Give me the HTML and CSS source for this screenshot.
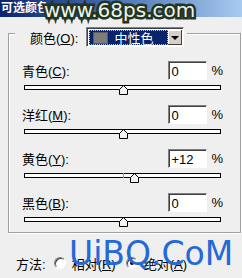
FILE: index.html
```html
<!DOCTYPE html>
<html>

<head>
    <meta charset="utf-8">
    <meta name="viewport" content="width=device-width">
    <title>可选颜色</title>
    <link rel="stylesheet" href="styles.css">
</head>

<body>
    <div class="titlebar">可选颜色</div>
    <div class="mark-top">www.68ps.com</div>

    <div class="group">
        <div class="legend">
            <span class="label">颜色(<u>O</u>):</span>
            <div class="select">
                <div class="select-value"><span class="swatch"></span>中性色</div>
                <div class="select-arrow"></div>
            </div>
        </div>

        <div class="row">
            <div class="row-top">
                <span class="label">青色(<u>C</u>):</span>
                <div class="field">0</div>
                <span class="pct">%</span>
            </div>
            <div class="slider">
                <div class="track"></div>
                <svg class="thumb" style="left: 50%;" width="9" height="10" viewBox="0 0 9 10"><polygon points="0.5,9.5 0.5,4.5 4.5,0.5 8.5,4.5 8.5,9.5" /></svg>
            </div>
        </div>

        <div class="row">
            <div class="row-top">
                <span class="label">洋红(<u>M</u>):</span>
                <div class="field">0</div>
                <span class="pct">%</span>
            </div>
            <div class="slider">
                <div class="track"></div>
                <svg class="thumb" style="left: 50%;" width="9" height="10" viewBox="0 0 9 10"><polygon points="0.5,9.5 0.5,4.5 4.5,0.5 8.5,4.5 8.5,9.5" /></svg>
            </div>
        </div>

        <div class="row">
            <div class="row-top">
                <span class="label">黄色(<u>Y</u>):</span>
                <div class="field">+12</div>
                <span class="pct">%</span>
            </div>
            <div class="slider">
                <div class="track"><div class="track-mark"></div></div>
                <svg class="thumb" style="left: 56%;" width="9" height="10" viewBox="0 0 9 10"><polygon points="0.5,9.5 0.5,4.5 4.5,0.5 8.5,4.5 8.5,9.5" /></svg>
            </div>
        </div>

        <div class="row">
            <div class="row-top">
                <span class="label">黑色(<u>B</u>):</span>
                <div class="field">0</div>
                <span class="pct">%</span>
            </div>
            <div class="slider">
                <div class="track"></div>
                <svg class="thumb" style="left: 50%;" width="9" height="10" viewBox="0 0 9 10"><polygon points="0.5,9.5 0.5,4.5 4.5,0.5 8.5,4.5 8.5,9.5" /></svg>
            </div>
        </div>
    </div>

    <div class="method">
        <span class="method-label">方法:</span>
        <span class="radio"></span>
        <span class="radio-text">相对(<u>R</u>)</span>
        <span class="radio checked"></span>
        <span class="radio-text">绝对(<u>A</u>)</span>
    </div>

    <div class="mark-bottom">UiBQ.CoM</div>
</body>

</html>
```

FILE: styles.css
```css
body {
    margin: 0;
    width: 242px;
    height: 278px;
    overflow: hidden;
    position: relative;
    background-color: #efefef;
    font-family: "Liberation Sans", "Noto Sans CJK SC", sans-serif;
    font-size: 13px;
    color: #000;
}

.titlebar {
    height: 17px;
    line-height: 16px;
    padding-left: 1px;
    background: linear-gradient(to right, #0a246a, #3f65a8 40%, #a6caf0);
    color: #fff;
    font-weight: bold;
    font-size: 12px;
}

/* watermarks sit over the dialog */
.mark-top {
    position: absolute;
    left: 44px;
    top: 0;
    font-family: "DejaVu Sans", sans-serif;
    font-size: 20px;
    line-height: 20px;
    color: #eef3ea;
    -webkit-text-stroke: 5px #223422;
    paint-order: stroke fill;
}

.mark-bottom {
    position: absolute;
    left: 69px;
    top: 237px;
    font-family: "DejaVu Sans", sans-serif;
    font-size: 33px;
    line-height: 33px;
    white-space: nowrap;
    color: #2369d8;
}

.group {
    margin: 16px 0 0 8px;
    width: 233px;
    box-sizing: border-box;
    border: 1px solid #a0a0a0;
    box-shadow: 1px 1px 0 #fff, inset 1px 1px 0 #fff;
    padding: 0 0 5px 0;
}

.legend {
    display: flex;
    align-items: center;
    width: max-content;
    height: 20px;
    margin: -7px 0 0 6px;
    padding: 0 3px 0 15px;
    background-color: #efefef;
}

.label {
    white-space: nowrap;
}

.legend .select {
    margin-left: 8px;
}

.select {
    display: flex;
    width: 98px;
    height: 20px;
    box-sizing: border-box;
    border: 1px solid;
    border-color: #808080 #fff #fff #808080;
    box-shadow: inset 1px 1px 0 #404040;
    padding: 2px 1px 1px 2px;
    background-color: #fff;
}

.select-value {
    flex: 1;
    display: flex;
    align-items: center;
    background-color: #0a246a;
    outline: 1px dotted #c8c8a0;
    outline-offset: -1px;
    color: #fff;
    font-size: 13px;
    padding-left: 4px;
}

.swatch {
    width: 15px;
    height: 12px;
    box-sizing: border-box;
    background-color: #7c7c7c;
    border: 1px solid #5a5a5a;
    margin-right: 6px;
}

.select-arrow {
    width: 14px;
    background-color: #d4d0c8;
    box-shadow: inset -1px -1px 0 #404040, inset 1px 1px 0 #fff;
    position: relative;
}

.select-arrow::after {
    content: "";
    position: absolute;
    left: 3px;
    top: 6px;
    border-left: 4px solid transparent;
    border-right: 4px solid transparent;
    border-top: 4px solid #000;
}

.row {
    margin-top: 10px;
}

.legend + .row {
    margin-top: 14px;
}

.row-top {
    display: flex;
    align-items: center;
    height: 19px;
    padding: 0 17px 0 13px;
}

.row-top .label {
    flex: 1;
}

.field {
    width: 39px;
    height: 19px;
    box-sizing: border-box;
    border: 1px solid;
    border-color: #808080 #fff #fff #808080;
    box-shadow: inset 1px 1px 0 #404040;
    background-color: #fff;
    padding: 2px 0 0 2px;
    line-height: 15px;
}

.pct {
    margin-left: 4px;
}

.slider {
    position: relative;
    width: 197px;
    height: 10px;
    margin: 5px 0 0 15px;
}

.track {
    position: relative;
    margin-top: 5px;
    height: 3px;
    border: 1px solid #000;
    background-color: #fff;
}

.track-mark {
    position: absolute;
    left: 98px;
    top: -1px;
    width: 1px;
    height: 5px;
    background-color: #9a9a9a;
}

.thumb {
    position: absolute;
    top: 0;
    margin-left: -4px;
    fill: #f4f4f4;
    stroke: #000;
    stroke-width: 1;
}

.method {
    display: flex;
    align-items: center;
    height: 16px;
    margin-top: 22px;
    padding-left: 16px;
}

.radio {
    width: 12px;
    height: 12px;
    box-sizing: border-box;
    border-radius: 50%;
    border: 1px solid;
    border-color: #808080 #fff #fff #808080;
    box-shadow: inset 1px 1px 0 #404040;
    background-color: #fff;
    margin: 0 6px 0 8px;
    position: relative;
}

.radio.checked::after {
    content: "";
    position: absolute;
    left: 3px;
    top: 3px;
    width: 4px;
    height: 4px;
    border-radius: 50%;
    background-color: #000;
}

.radio-text {
    margin-right: 2px;
}
```
